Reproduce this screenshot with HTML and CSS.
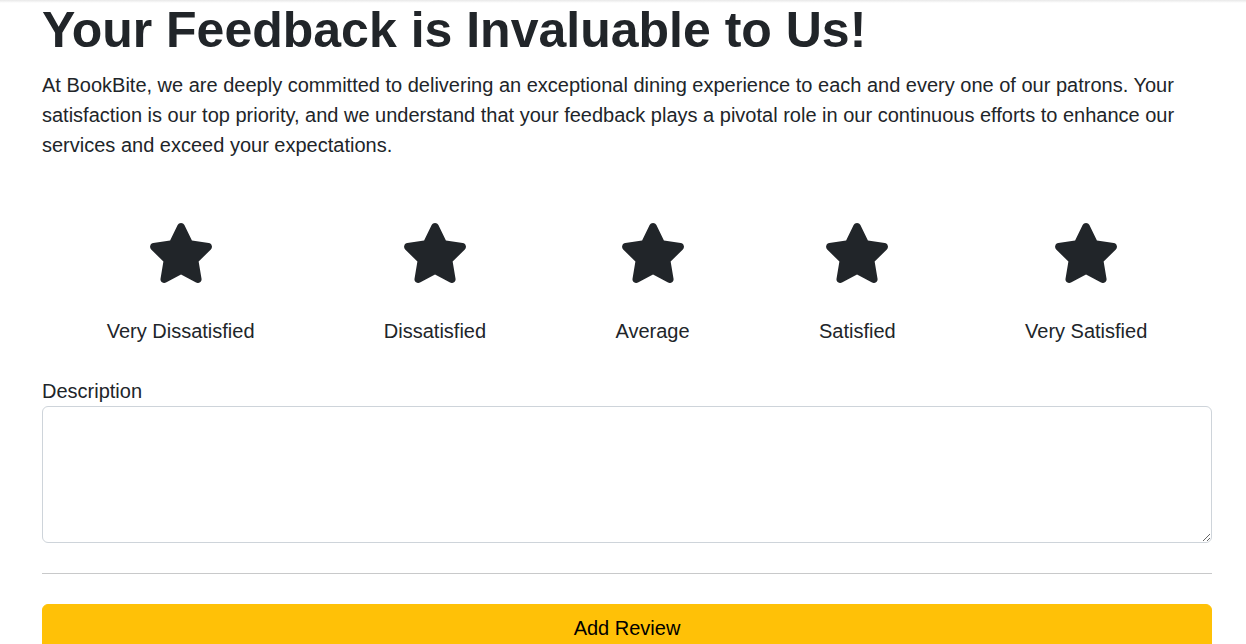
FILE: index.html
```html
<!DOCTYPE html>
<html lang="en">
<head>
<meta charset="utf-8">
<title>Feedback - BookBite</title>
<link rel="stylesheet" href="styles.css">
</head>
<body>
<main class="container">
  <h1 class="title">Your Feedback is Invaluable to Us!</h1>
  <p class="intro">At BookBite, we are deeply committed to delivering an exceptional dining experience to each and every one of our patrons. Your satisfaction is our top priority, and we understand that your feedback plays a pivotal role in our continuous efforts to enhance our services and exceed your expectations.</p>

  <div class="ratings">
    <div class="rating">
      <svg class="star" viewBox="0 0 576 512" aria-hidden="true"><path d="M316.9 18C311.6 7 300.4 0 288.1 0s-23.4 7-28.8 18L195 150.3 51.4 171.5c-12 1.8-22 10.2-25.7 21.7s-.7 24.2 7.9 32.7L137.8 329 113.2 474.7c-2 12 3 24.2 12.9 31.3s23 8 33.8 2.3l128.3-68.5 128.3 68.5c10.8 5.7 23.9 4.9 33.8-2.3s14.9-19.3 12.9-31.3L438.5 329 542.7 225.9c8.6-8.5 11.7-21.2 7.900-32.7s-13.7-19.9-25.7-21.7L381.2 150.3 316.9 18z"/></svg>
      <span class="rating-label">Very Dissatisfied</span>
    </div>
    <div class="rating">
      <svg class="star" viewBox="0 0 576 512" aria-hidden="true"><path d="M316.9 18C311.6 7 300.4 0 288.1 0s-23.4 7-28.8 18L195 150.3 51.4 171.5c-12 1.8-22 10.2-25.7 21.7s-.7 24.2 7.9 32.7L137.8 329 113.2 474.7c-2 12 3 24.2 12.9 31.3s23 8 33.8 2.3l128.3-68.5 128.3 68.5c10.8 5.7 23.9 4.9 33.8-2.3s14.9-19.3 12.9-31.3L438.5 329 542.7 225.9c8.6-8.5 11.7-21.2 7.9-32.7s-13.7-19.9-25.7-21.7L381.2 150.3 316.9 18z"/></svg>
      <span class="rating-label">Dissatisfied</span>
    </div>
    <div class="rating">
      <svg class="star" viewBox="0 0 576 512" aria-hidden="true"><path d="M316.9 18C311.6 7 300.4 0 288.1 0s-23.4 7-28.8 18L195 150.3 51.4 171.5c-12 1.8-22 10.2-25.7 21.7s-.7 24.2 7.9 32.7L137.8 329 113.2 474.7c-2 12 3 24.2 12.9 31.3s23 8 33.8 2.3l128.3-68.5 128.3 68.5c10.8 5.7 23.9 4.9 33.8-2.3s14.9-19.3 12.9-31.3L438.5 329 542.7 225.9c8.6-8.5 11.7-21.2 7.9-32.7s-13.7-19.9-25.7-21.7L381.2 150.3 316.9 18z"/></svg>
      <span class="rating-label">Average</span>
    </div>
    <div class="rating">
      <svg class="star" viewBox="0 0 576 512" aria-hidden="true"><path d="M316.9 18C311.6 7 300.4 0 288.1 0s-23.4 7-28.8 18L195 150.3 51.4 171.5c-12 1.8-22 10.2-25.7 21.7s-.7 24.2 7.9 32.7L137.8 329 113.2 474.7c-2 12 3 24.2 12.9 31.3s23 8 33.8 2.3l128.3-68.5 128.3 68.5c10.8 5.7 23.9 4.9 33.8-2.3s14.9-19.3 12.9-31.3L438.5 329 542.7 225.9c8.6-8.5 11.7-21.2 7.9-32.7s-13.7-19.9-25.7-21.7L381.2 150.3 316.9 18z"/></svg>
      <span class="rating-label">Satisfied</span>
    </div>
    <div class="rating">
      <svg class="star" viewBox="0 0 576 512" aria-hidden="true"><path d="M316.9 18C311.6 7 300.4 0 288.1 0s-23.4 7-28.8 18L195 150.3 51.4 171.5c-12 1.8-22 10.2-25.7 21.7s-.7 24.2 7.9 32.7L137.8 329 113.2 474.7c-2 12 3 24.2 12.9 31.3s23 8 33.8 2.3l128.3-68.5 128.3 68.5c10.8 5.7 23.9 4.9 33.8-2.3s14.9-19.3 12.9-31.3L438.5 329 542.7 225.9c8.6-8.5 11.7-21.2 7.9-32.7s-13.7-19.9-25.7-21.7L381.2 150.3 316.9 18z"/></svg>
      <span class="rating-label">Very Satisfied</span>
    </div>
  </div>

  <form class="review-form">
    <label class="form-label" for="description">Description</label>
    <textarea id="description" class="form-control"></textarea>
    <hr class="divider">
    <button type="button" class="btn-review">Add Review</button>
  </form>
</main>
</body>
</html>
```

FILE: styles.css
```css
html, body {
  margin: 0;
  padding: 0;
}

body {
  font-family: "Liberation Sans", Arial, sans-serif;
  font-size: 20px;
  line-height: 1.5;
  color: #212529;
  background: #fff linear-gradient(#e8e8e8, #fff 3px) no-repeat;
}

.container {
  padding: 0 34px 0 42px;
}

.title {
  margin: 0 0 10px;
  font-size: 50px;
  font-weight: 700;
  line-height: 1.2;
}

.intro {
  margin: 0;
}

.ratings {
  display: flex;
  justify-content: space-around;
  margin-top: 63px;
}

.rating {
  display: flex;
  flex-direction: column;
  align-items: center;
}

.star {
  display: block;
  width: 68px;
  height: 60px;
  fill: #212529;
}

.rating-label {
  margin-top: 33px;
}

.review-form {
  display: flex;
  flex-direction: column;
  margin-top: 30px;
}

.form-label {
  display: block;
}

.form-control {
  display: block;
  box-sizing: border-box;
  width: 100%;
  height: 137px;
  margin: 0;
  padding: 6px 12px;
  border: 1px solid #ced4da;
  border-radius: 6px;
  font: inherit;
  color: #212529;
  resize: vertical;
}

.divider {
  width: 100%;
  margin: 30px 0;
  border: 0;
  border-top: 1px solid #c8c9ca;
}

.btn-review {
  width: 100%;
  height: 48px;
  padding: 8px 16px;
  border: 1px solid #ffc107;
  border-radius: 6px;
  background: #ffc107;
  color: #000;
  font: inherit;
  font-size: 20px;
  line-height: 1.5;
  cursor: pointer;
}
```
